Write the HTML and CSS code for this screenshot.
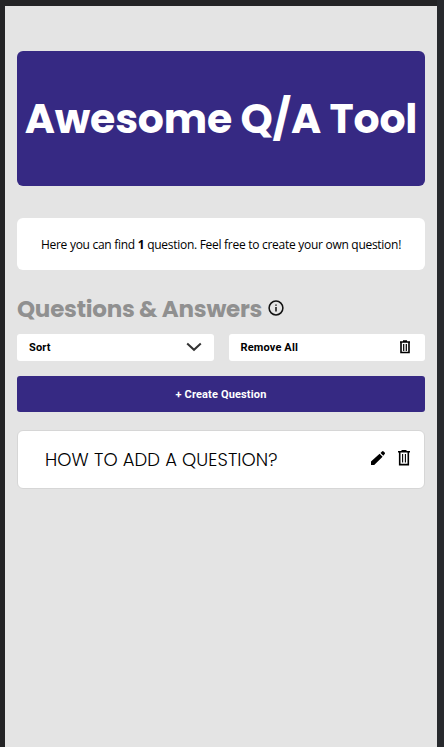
FILE: index.html
```html
<!DOCTYPE html>
<html lang="en">
<head>
<meta charset="utf-8">
<title>Awesome Q/A Tool</title>
<link rel="stylesheet" href="styles.css">
</head>
<body>
<main class="page">
  <header class="hero"><h1 class="hero-title">Awesome Q/A Tool</h1></header>
  <p class="intro"><span>Here you can find <b>1</b> question. Feel free to create your own question!</span></p>
  <div class="heading">
    <h2 class="heading-title">Questions &amp; Answers</h2>
    <svg class="info" viewBox="0 0 16 16" fill="none" stroke="#111"><circle cx="8" cy="8" r="6.9" stroke-width="1.5"/><path d="M8 7v4.5M8 4.4v1.4" stroke-width="1.5"/></svg>
  </div>
  <div class="tools">
    <button class="tool"><span class="tool-label">Sort</span>
      <svg class="chevron" viewBox="0 0 16 10" fill="none" stroke="#333" stroke-width="2"><path d="M1.2 1.5 8 7.8l6.8-6.3"/></svg>
    </button>
    <button class="tool"><span class="tool-label">Remove All</span>
      <svg class="trash-small" viewBox="0 0 12 14" fill="none" stroke="#000"><path d="M1 2h10M4 1h4" stroke-width="1.4"/><path d="M2 2v10.5h8V2" stroke-width="1.6"/><path d="M4.7 4v7M7.3 4v7" stroke-width="1.2"/></svg>
    </button>
  </div>
  <button class="create"><span>+ Create Question</span></button>
  <article class="question">
    <h3 class="question-title">HOW TO ADD A QUESTION?</h3>
    <svg class="pencil" viewBox="0 0 16 16" fill="#000"><path d="M1 15v-3.4L9.6 3.7l3 3L4.2 15zM10.5 2.9 12 1.4q.8-.7 1.6 0l1.1 1.1q.8.8 0 1.6l-1.4 1.6z"/></svg>
    <svg class="trash" viewBox="0 0 12 16" fill="none" stroke="#000"><path d="M0 1.7h12M3.5.7h5" stroke-width="1.4"/><path d="M1.7 2v12.6h8.6V2" stroke-width="1.6"/><path d="M4.6 4v8.5M7.4 4v8.5" stroke-width="1.1"/></svg>
  </article>
</main>
</body>
</html>
```
FILE: styles.css
```css
* { box-sizing: border-box; }
html, body { height: 100%; }
body {
  margin: 0;
  padding: 6px 7px 0 5px;
  overflow: hidden;
  background: linear-gradient(90deg, #232325 0 437px, #27292d 437px);
  color: #000;
}
h1, h2, h3, p { margin: 0; font-weight: inherit; }
button { border: 0; margin: 0; font: 700 11px/1 Roboto, sans-serif; letter-spacing: .15px; color: #000; }
svg { display: block; flex: none; }
.page {
  height: 100%;
  padding: 45px 12px 0;
  background: #e4e4e4;
}
.hero {
  height: 135px;
  display: flex;
  align-items: center;
  justify-content: center;
  background: #362983;
  border-radius: 6px;
}
.hero-title {
  font: 700 41px/60px Poppins, Inter, sans-serif;
  letter-spacing: -.2px;
  color: #fff;
  white-space: nowrap;
}
.intro {
  height: 52px;
  margin-top: 31.6px;
  padding-top: 2px;
  display: flex;
  align-items: center;
  justify-content: center;
  background: #fff;
  border-radius: 6px;
  font: 400 12px/18px "Open Sans", sans-serif;
  letter-spacing: -.28px;
  white-space: nowrap;
}
.heading {
  height: 35px;
  margin-top: 22px;
  display: flex;
  align-items: center;
}
.heading-title {
  width: 251px;
  font: 700 23px/35px Poppins, Inter, sans-serif;
  letter-spacing: -.25px;
  color: #909090;
  white-space: nowrap;
}
.info { width: 16px; height: 16px; margin-top: -3px; }
.tools {
  margin-top: 7px;
  display: grid;
  grid-template-columns: 1fr 1fr;
  gap: 15px;
}
.tool {
  height: 27px;
  padding: 0 12px;
  display: flex;
  align-items: center;
  justify-content: space-between;
  background: #fff;
  border-radius: 3px;
}
.chevron { width: 16px; height: 10px; }
.trash-small { width: 12px; height: 14px; margin-right: 2px; }
.create {
  width: 100%;
  height: 36px;
  margin-top: 15px;
  padding: 1px 0 0;
  display: block;
  background: #362983;
  color: #fff;
  border-radius: 3px;
}
.question {
  height: 59px;
  margin-top: 18px;
  padding: 0 14px 0 27px;
  display: flex;
  align-items: center;
  background: #fff;
  border: 1px solid #d6d6d6;
  border-radius: 6px;
}
.question-title {
  flex: 1;
  font: 300 18px/27px Poppins, Inter, sans-serif;
  letter-spacing: .1px;
  white-space: nowrap;
}
.pencil { width: 16px; height: 16px; margin: -3px 12px 0 0; }
.trash { width: 12px; height: 16px; margin-top: -3px; }
```
